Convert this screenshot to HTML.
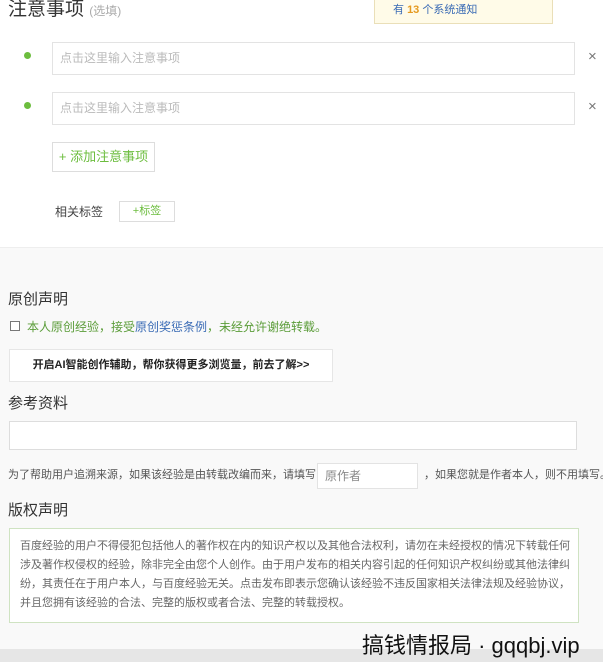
<!DOCTYPE html>
<html><head><meta charset="utf-8"><style>
*{margin:0;padding:0;box-sizing:border-box}
body{width:603px;height:662px;overflow:hidden;background:#f9f9f9;font-family:"Liberation Sans","Noto Sans CJK SC",sans-serif;position:relative;color:#333}
.a{position:absolute;white-space:nowrap}
.inp{position:absolute;background:#fff;border:1px solid #e3e3e3;font-size:12px;color:#bbb;padding-left:7px}
</style></head><body>
<div class="a" style="left:0;top:0;width:603px;height:248px;background:#fff;border-bottom:1px solid #eee"></div>
<div class="a" style="left:8px;top:-6px;font-size:19px;color:#333">注意事项 <span style="font-size:12px;color:#aaa">(选填)</span></div>
<div class="a" style="left:374px;top:-2px;width:179px;height:26px;background:#fffbe8;border:1px solid #eadfb8;font-size:11px;color:#3a6bb5;padding:2px 0 0 18px">有 <b style="color:#e59a20">13</b> 个系统通知</div>
<div class="a" style="left:24px;top:52px;width:7px;height:7px;border-radius:50%;background:#6cbd3e"></div>
<div class="a" style="left:24px;top:102px;width:7px;height:7px;border-radius:50%;background:#6cbd3e"></div>
<div class="inp" style="left:52px;top:42px;width:523px;height:33px;line-height:31px">点击这里输入注意事项</div>
<div class="inp" style="left:52px;top:92px;width:523px;height:33px;line-height:31px">点击这里输入注意事项</div>
<div class="a" style="left:588px;top:48px;font-size:15px;color:#777">×</div>
<div class="a" style="left:588px;top:98px;font-size:15px;color:#777">×</div>
<div class="a" style="left:52px;top:142px;width:103px;height:30px;border:1px solid #ddd;background:#fff;font-size:13px;color:#6cbd3e;text-align:center;line-height:28px">+ 添加注意事项</div>
<div class="a" style="left:55px;top:203px;font-size:12px;color:#444">相关标签</div>
<div class="a" style="left:119px;top:201px;width:56px;height:21px;border:1px solid #ddd;background:#fff;font-size:11px;color:#6cbd3e;text-align:center;line-height:19px">+标签</div>
<div class="a" style="left:8px;top:288px;font-size:15px;color:#333">原创声明</div>
<div class="a" style="left:10px;top:321px;width:10px;height:10px;border:1px solid #777;background:#fff"></div>
<div class="a" style="left:27px;top:318px;font-size:12px;color:#5a9c38">本人原创经验，接受<span style="color:#3a6bb5">原创奖惩条例</span>，未经允许谢绝转载。</div>
<div class="a" style="left:9px;top:349px;width:324px;height:33px;background:#fff;border:1px solid #e6e6e6;font-size:11px;font-weight:bold;color:#222;text-align:center;line-height:31px">开启AI智能创作辅助，帮你获得更多浏览量，前去了解&gt;&gt;</div>
<div class="a" style="left:8px;top:392px;font-size:15px;color:#333">参考资料</div>
<div class="a" style="left:9px;top:421px;width:568px;height:29px;background:#fff;border:1px solid #ddd"></div>
<div class="a" style="left:8px;top:466px;font-size:11px;color:#555">为了帮助用户追溯来源，如果该经验是由转载改编而来，请填写</div>
<div class="inp" style="left:317px;top:463px;width:101px;height:26px;line-height:24px;color:#888">原作者</div>
<div class="a" style="left:424px;top:466px;font-size:11px;color:#555">，如果您就是作者本人，则不用填写。</div>
<div class="a" style="left:8px;top:499px;font-size:15px;color:#333">版权声明</div>
<div class="a" style="left:9px;top:528px;width:570px;height:95px;background:#fff;border:1px solid #cfe3c2;font-size:11px;color:#666;line-height:19px;padding:8px 0 0 10px;white-space:normal">百度经验的用户不得侵犯包括他人的著作权在内的知识产权以及其他合法权利，请勿在未经授权的情况下转载任何<br>涉及著作权侵权的经验，除非完全由您个人创作。由于用户发布的相关内容引起的任何知识产权纠纷或其他法律纠<br>纷，其责任在于用户本人，与百度经验无关。点击发布即表示您确认该经验不违反国家相关法律法规及经验协议，<br>并且您拥有该经验的合法、完整的版权或者合法、完整的转载授权。</div>
<div class="a" style="left:0;top:649px;width:603px;height:13px;background:#e6e6e6"></div>
<div class="a" style="left:362px;top:628px;font-size:22px;color:#111">搞钱情报局 · gqqbj.vip</div>
</body></html>
